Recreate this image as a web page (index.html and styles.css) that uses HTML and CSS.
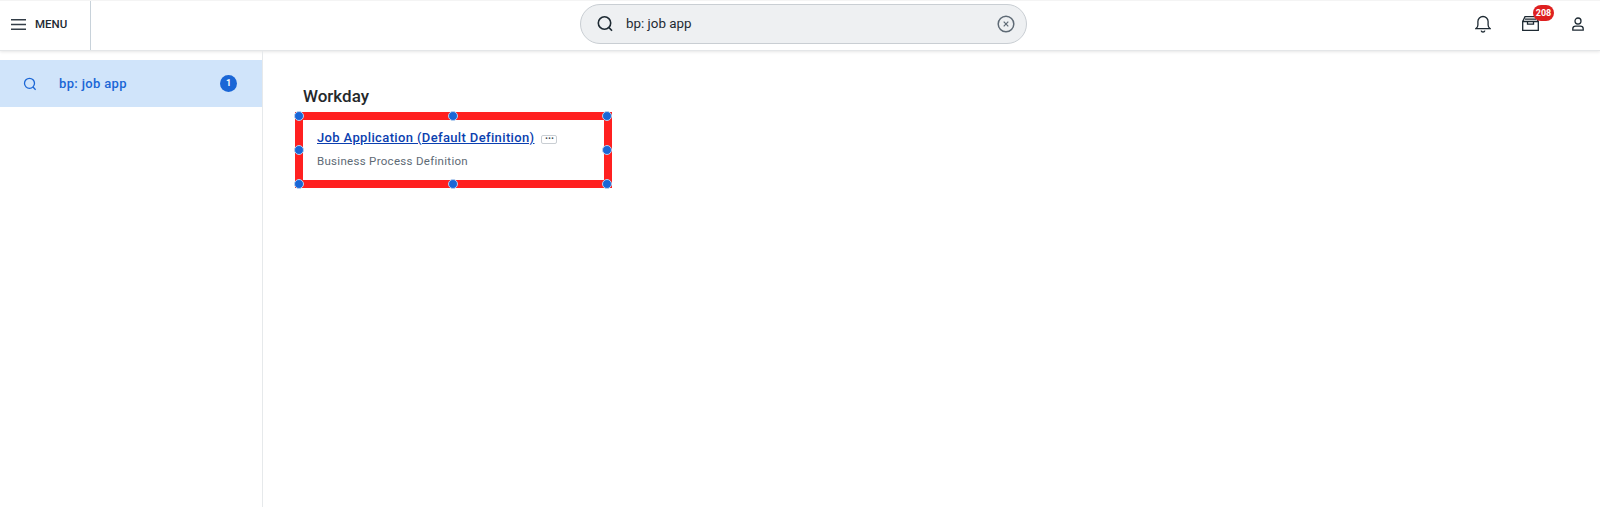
FILE: index.html
```html
<!DOCTYPE html>
<html lang="en">
<head>
    <meta charset="UTF-8">
    <title>Search - bp: job app</title>
    <link rel="stylesheet" href="styles.css">
</head>
<body>

    <header class="topbar">
        <div class="menu-box">
            <svg class="menu-icon" width="15" height="11" viewBox="0 0 15 11">
                <path d="M0 .8h15M0 5.500h15M0 10.200h15" stroke="#333d47" stroke-width="1.400" fill="none"/>
            </svg>
            <span class="menu-label">MENU</span>
        </div>

        <div class="search-wrap">
            <div class="search-box">
                <svg width="18" height="18" viewBox="0 0 18 18" fill="none" stroke="#1e2a33" stroke-width="1.600">
                    <circle cx="8.500" cy="8" r="6.200"/>
                    <path d="M13 12.600l3 3.200"/>
                </svg>
                <span class="search-text">bp: job app</span>
                <svg class="clear-icon" width="18" height="18" viewBox="0 0 18 18" fill="none" stroke="#5e6a75" stroke-width="1.500">
                    <circle cx="9" cy="9" r="7.800"/>
                    <path d="M6.700 6.700l4.600 4.600M11.300 6.700l-4.600 4.600" stroke-width="1.200"/>
                </svg>
            </div>
        </div>

        <div class="top-icons">
            <svg width="16" height="18" viewBox="0 0 16 18" fill="none" stroke="#1e2a33" stroke-width="1.300">
                <path d="M1 13.600c1.300-1 1.900-2 1.900-3.600V6.600a5.100 5.100 0 0 1 10.200 0V10c0 1.600.6 2.600 1.900 3.600z"/>
                <path d="M6.200 15.600c.3 1 1 1.500 1.800 1.500s1.500-.5 1.800-1.500" stroke-width="1.500"/>
            </svg>
            <div class="inbox">
                <svg width="17" height="15" viewBox="0 0 17 15" fill="none" stroke="#1e2a33" stroke-width="1.300">
                    <path d="M.7 5.500h15.600v8.800H.7zM.7 5.500L3 .7h11l2.300 4.800"/>
                    <path d="M5.500 5.500v2.600h6V5.500M3 3.200h11"/>
                </svg>
                <span class="inbox-badge">208</span>
            </div>
            <svg class="user-icon" width="12" height="14" viewBox="0 0 12 14" fill="none" stroke="#1e2a33" stroke-width="1.300">
                <circle cx="6" cy="4" r="3"/>
                <path d="M.8 13.200v-1.500c0-1.500 1.400-2.500 2.900-2.500h4.600c1.500 0 2.900 1 2.900 2.500v1.500z"/>
            </svg>
        </div>
    </header>

    <div class="page">
        <aside class="sidebar">
            <div class="side-item">
                <svg width="14" height="14" viewBox="0 0 14 14" fill="none" stroke="#1a66d6" stroke-width="1.300">
                    <circle cx="6.500" cy="6.300" r="5"/>
                    <path d="M10 10l2.600 2.800"/>
                </svg>
                <span class="side-text">bp: job app</span>
                <span class="side-count">1</span>
            </div>
        </aside>

        <main class="results">
            <h2 class="group-title">Workday</h2>
            <div class="result-card">
                <div class="result-head">
                    <a class="result-link" href="#">Job Application (Default Definition)</a>
                    <span class="more-btn">&middot;&middot;&middot;</span>
                </div>
                <p class="result-sub">Business Process Definition</p>

                <!-- annotation handles -->
                <span class="handle h-tl"></span>
                <span class="handle h-tc"></span>
                <span class="handle h-tr"></span>
                <span class="handle h-ml"></span>
                <span class="handle h-mr"></span>
                <span class="handle h-bl"></span>
                <span class="handle h-bc"></span>
                <span class="handle h-br"></span>
            </div>
        </main>
    </div>

</body>
</html>
```

FILE: styles.css
```css
* {
    box-sizing: border-box;
}

html, body {
    height: 100%;
}

body {
    margin: 0;
    font-family: Roboto, "Liberation Sans", sans-serif;
    background-color: white;
    display: flex;
    flex-direction: column;
    overflow: hidden;
}

.topbar {
    height: 51px;
    flex-shrink: 0;
    display: flex;
    align-items: stretch;
    border-top: 1px solid #f4f4f4;
    border-bottom: 1px solid #e4e6e8;
    box-shadow: 0 1px 3px rgba(0, 0, 0, 0.1);
}

.menu-box {
    width: 91px;
    display: flex;
    align-items: center;
    gap: 9px;
    padding: 0 0 3px 11px;
    border-right: 1px solid #c8d2da;
}

.menu-label {
    font-size: 11.500px;
    font-weight: 500;
    color: #1e2a33;
}

.search-wrap {
    flex: 1;
    display: flex;
    align-items: center;
    padding: 0 0 4px 489px;
}

.search-box {
    width: 447px;
    height: 40px;
    display: flex;
    align-items: center;
    padding: 0 11px 0 15px;
    background-color: #eef0f2;
    border: 1px solid #c9ced3;
    border-radius: 20px;
}

.search-text {
    flex: 1;
    margin-left: 12px;
    font-size: 13.400px;
    color: #1e2a33;
}

.top-icons {
    display: flex;
    align-items: center;
    gap: 31px;
    padding: 0 16px 4px 0;
}

.user-icon {
    margin-left: 2px;
}

.inbox {
    position: relative;
    display: flex;
}

.inbox-badge {
    position: absolute;
    left: 11px;
    top: -11px;
    width: 21px;
    height: 16px;
    border-radius: 8px;
    background-color: #de2020;
    color: white;
    font-size: 9px;
    font-weight: 700;
    line-height: 16px;
    text-align: center;
}

.page {
    flex: 1;
    display: flex;
}

.sidebar {
    width: 263px;
    flex-shrink: 0;
    padding-top: 9px;
    border-right: 1px solid #e6e9eb;
}

.side-item {
    height: 47px;
    display: flex;
    align-items: center;
    padding: 0 25px 0 23px;
    background-color: #d0e4fa;
}

.side-text {
    flex: 1;
    margin-left: 22px;
    font-size: 13px;
    font-weight: 500;
    letter-spacing: 0.35px;
    color: #1a66d6;
}

.side-count {
    width: 17px;
    height: 17px;
    border-radius: 50%;
    background-color: #1a66d6;
    color: white;
    font-size: 9px;
    font-weight: 700;
    line-height: 17px;
    text-align: center;
}

.results {
    flex: 1;
    padding: 35px 0 0 32px;
}

.group-title {
    margin: 0 0 6px 8px;
    font-size: 17px;
    font-weight: 500;
    line-height: 20px;
    color: #25282b;
}

.result-card {
    position: relative;
    width: 317px;
    height: 76px;
    padding: 10px 0 0 14px;
    border: 8px solid #ff2020;
}

.result-head {
    display: flex;
    align-items: center;
    gap: 7px;
}

.result-link {
    font-size: 13px;
    font-weight: 500;
    letter-spacing: 0.36px;
    color: #0b3fb0;
}

.more-btn {
    width: 16px;
    height: 9px;
    margin-top: 4px;
    border: 1px solid #c9ced3;
    border-radius: 2px;
    font-size: 10px;
    font-weight: 700;
    line-height: 6px;
    text-align: center;
    color: #3f4a55;
}

.result-sub {
    margin: 9px 0 0;
    font-size: 11.500px;
    letter-spacing: 0.3px;
    color: #5e6a75;
}

.handle {
    position: absolute;
    width: 10px;
    height: 10px;
    border-radius: 50%;
    background-color: #1a66d6;
    border: 1px solid #b9d2f0;
}

.h-tl { left: -9px; top: -9px; }
.h-tc { left: 145px; top: -9px; }
.h-tr { right: -8px; top: -9px; }
.h-ml { left: -9px; top: 25px; }
.h-mr { right: -8px; top: 25px; }
.h-bl { left: -9px; bottom: -9px; }
.h-bc { left: 145px; bottom: -9px; }
.h-br { right: -8px; bottom: -9px; }
```
